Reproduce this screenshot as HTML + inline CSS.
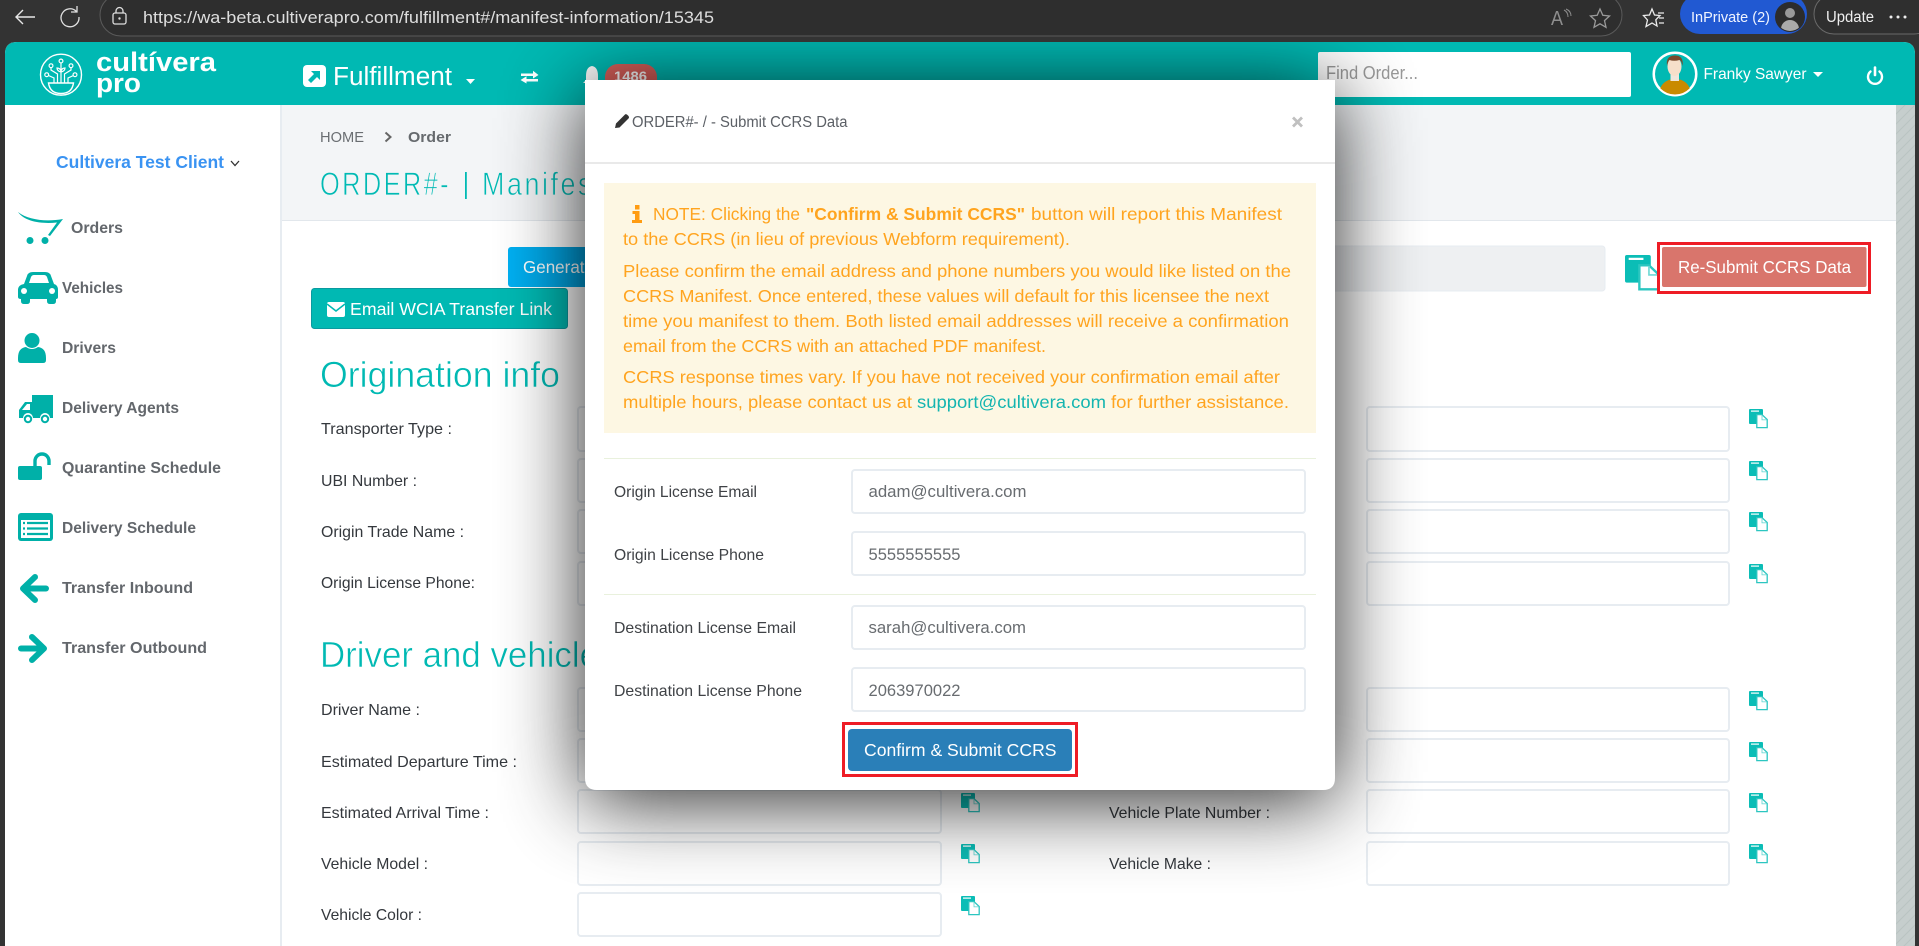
<!DOCTYPE html>
<html lang="en">
<head>
<meta charset="utf-8">
<title>Submit CCRS Data</title>
<style>
html,body{margin:0;padding:0;background:#333;width:1919px;height:946px;overflow:hidden}
svg{display:block}
text{font-family:"Liberation Sans",sans-serif;white-space:pre}
.lb{font-size:16px;fill:#34383d}
.nav{font-size:16px;font-weight:bold;fill:#63676c}
.al{font-size:17.5px;fill:#ffa41f}
.ml{font-size:16px;fill:#3f4246}
.mv{font-size:16.5px;fill:#686c70}
.h2{font-size:36px;fill:#00b9b3;stroke:#fff;stroke-width:.55px}
.ttl{font-size:32px;fill:#00bab4;stroke:#f3f5f7;stroke-width:.7px}
.inp{fill:#fff;stroke:#e7ecf1;stroke-width:2}
.ico{fill:#00b0a8}
</style>
</head>
<body>
<svg xmlns="http://www.w3.org/2000/svg" width="1919" height="946" viewBox="0 0 1919 946">
<defs>
<symbol id="copy" viewBox="0 0 19 19" overflow="visible">
<path d="M1 0H13Q14 0 14 1V15H1Q0 15 0 14V1Q0 0 1 0Z" fill="#0bbdb6"/>
<rect x="2" y="1.500" width="8" height="1.200" fill="#fff"/>
<path d="M7.800 5.600H13L18.200 10.500V18.600H7.800Z" fill="#fff" stroke="#2cc6c0" stroke-width="1.300"/>
<path d="M13 6V10.800H18" fill="none" stroke="#6fd9d5" stroke-width=".9"/>
</symbol>
<filter id="blur" x="-50%" y="-50%" width="200%" height="200%"><feGaussianBlur stdDeviation="42"/></filter>
<clipPath id="page"><path d="M5 54Q5 42 17 42H1903Q1915 42 1915 54V946H5Z"/></clipPath>
<clipPath id="av"><circle cx="1675" cy="74" r="20.500"/></clipPath>
<clipPath id="av2"><circle cx="1790" cy="17" r="14"/></clipPath>
<pattern id="sb" width="10" height="10" patternUnits="userSpaceOnUse"><rect width="10" height="10" fill="#c6cecd"/><path d="M0 10L10 0M-3 3L3 -3M7 13L13 7" stroke="#b9c3c2" stroke-width="1"/></pattern>
<linearGradient id="gen" x1="0" x2="1" y1="0" y2="0"><stop offset="0" stop-color="#00b0f2"/><stop offset="1" stop-color="#0090c8"/></linearGradient>
</defs>

<!-- Browser chrome -->
<rect width="1919" height="946" fill="#333"/>
<rect x="100" y="-6" width="1522" height="42" rx="21" fill="#2e2e2e" stroke="#5a5a5a" stroke-width="1"/>
<path d="M35 17H16M23 10L16 17L23 24" fill="none" stroke="#e8e8e8" stroke-width="1.400"/>
<path d="M76.500 11.500A9 9 0 1 0 79 17M77 6V12H71" fill="none" stroke="#e0e0e0" stroke-width="1.300"/>
<rect x="113" y="13" width="13" height="11" rx="2" fill="none" stroke="#ddd" stroke-width="1.300"/>
<path d="M116 13V11A3.500 3.500 0 0 1 123 11V13" fill="none" stroke="#ddd" stroke-width="1.300"/>
<circle cx="119.500" cy="18.500" r="1.200" fill="#ddd"/>
<text x="143" y="23" font-size="16.500" fill="#dedede" textLength="571" lengthAdjust="spacingAndGlyphs">https://wa-beta.cultiverapro.com/fulfillment#/manifest-information/15345</text>
<text x="1551" y="25" font-size="20" fill="#8d8d8d" textLength="12" lengthAdjust="spacingAndGlyphs">A</text>
<path d="M1564 10Q1568 12 1568 17M1566 9Q1571 11 1571 16" fill="none" stroke="#8d8d8d" stroke-width="1"/>
<path d="M1600 9L1602.800 15.300L1609.500 16L1604.500 20.600L1606 27.300L1600 23.800L1594 27.300L1595.500 20.600L1590.500 16L1597.200 15.300Z" fill="none" stroke="#9a9a9a" stroke-width="1.300"/>
<path d="M1652 9L1654.500 15L1660 15.500L1655.800 19.800L1657 26L1652 23L1646 26.500L1647.500 20L1643.500 15.500L1649.500 15Z" fill="none" stroke="#ececec" stroke-width="1.300"/>
<path d="M1658 13H1664M1659 18H1664M1659 23H1664" stroke="#ececec" stroke-width="1.200"/>
<rect x="1680" y="-6" width="127" height="40" rx="20" fill="#2159d2"/>
<text x="1691" y="22" font-size="15" fill="#f0f4ff" textLength="79" lengthAdjust="spacingAndGlyphs">InPrivate (2)</text>
<circle cx="1790" cy="17" r="15" fill="#2c2c2c"/>
<g clip-path="url(#av2)"><circle cx="1790" cy="13" r="5" fill="#999"/><ellipse cx="1790" cy="29" rx="9" ry="9" fill="#aaa"/></g>
<rect x="1814" y="-6" width="120" height="40" rx="20" fill="#2f2f2f" stroke="#6a6a6a"/>
<text x="1826" y="22" font-size="15.500" fill="#eee" textLength="48" lengthAdjust="spacingAndGlyphs">Update</text>
<circle cx="1891" cy="17" r="1.500" fill="#eee"/><circle cx="1898" cy="17" r="1.500" fill="#eee"/><circle cx="1905" cy="17" r="1.500" fill="#eee"/>

<!-- App page -->
<g clip-path="url(#page)">
<rect x="5" y="42" width="1910" height="904" fill="#fff"/>
<rect x="5" y="42" width="1910" height="63" fill="#00b9b3"/>
<!-- Logo -->
<g fill="none" stroke="#fff" stroke-width="1.200">
<circle cx="61" cy="74.700" r="20.500" stroke-width="1.400"/>
<path d="M48.500 83H73.500Q72 93.500 61 93.500Q50 93.500 48.500 83Z" stroke-width="1.400"/>
<path d="M61 83V63M57.500 83V74L51 70V67.500M64.500 83V74L71 70V67.500M54 83V78L48.500 75.500M68 83V78L73.500 75.500M61 72Q57 71 57 68Q60 68 61 71Q62 68 65 68Q65 71 61 72Z"/>
<circle cx="61" cy="61" r="1.900"/><circle cx="51" cy="65.700" r="1.900"/><circle cx="71" cy="65.700" r="1.900"/><circle cx="46.700" cy="74.700" r="1.900"/><circle cx="75" cy="74.700" r="1.900"/>
</g>
<text x="96" y="71" font-size="27" font-weight="bold" fill="#fff" textLength="120" lengthAdjust="spacingAndGlyphs">cultívera</text>
<text x="96" y="92" font-size="27" font-weight="bold" fill="#fff" textLength="45" lengthAdjust="spacingAndGlyphs">pro</text>
<!-- Fulfillment -->
<rect x="303" y="65" width="23" height="22" rx="4" fill="#fff"/>
<path d="M311 71H320V80L317 77L311 83L308 80L314 74Z" fill="#00b9b3"/>
<text x="333" y="85" font-size="25.500" fill="#fff" textLength="119" lengthAdjust="spacingAndGlyphs">Fulfillment</text>
<path d="M466 79H475L470.500 84Z" fill="#fff"/>
<path d="M521 73.500H533V70.800L538.500 75L533 78.500V76H521ZM538 79H526.500V76.200L520.500 80L526.500 83.500V81.500H538Z" fill="#fff"/>
<path d="M592 66Q598 67 598 76V80L601 83H583L586 80V76Q586 67 592 66Z" fill="#fff"/>
<rect x="605" y="64" width="52" height="30" rx="13" fill="#d9605a"/>
<text x="614" y="81" font-size="14" font-weight="bold" fill="#fff" textLength="33" lengthAdjust="spacingAndGlyphs">1486</text>
<!-- Search -->
<rect x="1318" y="52" width="313" height="45" rx="2" fill="#fff"/>
<text x="1326" y="79" font-size="18.500" fill="#999" textLength="92" lengthAdjust="spacingAndGlyphs">Find Order...</text>
<!-- User -->
<circle cx="1675" cy="74" r="21.500" fill="#fff" stroke="#fff" stroke-width="2"/>
<circle cx="1675" cy="74" r="20" fill="#00b9b3"/>
<g clip-path="url(#av)">
<path d="M1659 96Q1659 83 1670 79.500L1675 81L1680 79.500Q1691 83 1691 96Z" fill="#c98a00"/>
<rect x="1670.500" y="72" width="8.500" height="9" fill="#efe6dc"/>
<ellipse cx="1674.500" cy="66.500" rx="7" ry="9.500" fill="#f6dfca"/>
<path d="M1667 66Q1665.500 55.500 1675 55.500Q1684 55.500 1682.500 66Q1681.500 60.500 1679.500 60Q1674 61.500 1669.500 60Q1668 61 1667 66Z" fill="#7b4a2c"/>
</g>
<text x="1703.500" y="79" font-size="16" fill="#fff" textLength="103" lengthAdjust="spacingAndGlyphs">Franky Sawyer</text>
<path d="M1813 72H1823L1818 77Z" fill="#fff"/>
<path d="M1870.500 71.500A7 7 0 1 0 1879.500 71.500" fill="none" stroke="#fff" stroke-width="2.400" stroke-linecap="round"/>
<path d="M1875 67.500V75" stroke="#fff" stroke-width="2.600" stroke-linecap="round"/>

<!-- Sidebar -->
<rect x="280" y="105" width="2" height="841" fill="#e7ecf1"/>
<text x="56" y="168" font-size="17.500" font-weight="bold" fill="#3a93f2" textLength="168" lengthAdjust="spacingAndGlyphs">Cultivera Test Client</text>
<path d="M231 161L235 165.500L239 161" fill="none" stroke="#333" stroke-width="1.300"/>

<path class="ico" d="M18 212C28 220 46 222 63 219L50 236L48 235L57 222.500C42 224 25 222 18 212Z"/>
<circle class="ico" cx="30" cy="240.500" r="3.500"/><circle class="ico" cx="45" cy="240.500" r="3.500"/>
<text class="nav" x="71" y="233" textLength="52" lengthAdjust="spacingAndGlyphs">Orders</text>

<path class="ico" fill-rule="evenodd" d="M24 284L27 276Q28 272 33 272H45Q50 272 51 276L54 284Q58 285 58 290V297Q58 299 56 299V301Q56 304 53 304H50Q47 304 47 301V299H30V301Q30 304 27 304H24Q21 304 21 301V299Q18 299 18 297V290Q18 285 24 284ZM29 283H49L47 277Q46 275 44 275H34Q32 275 31 277Z"/>
<circle cx="24" cy="291" r="3" fill="#fff"/><circle cx="52" cy="291" r="3" fill="#fff"/>
<text class="nav" x="62" y="293" textLength="61" lengthAdjust="spacingAndGlyphs">Vehicles</text>

<circle class="ico" cx="32" cy="340.500" r="7.500"/>
<path class="ico" d="M18 358Q18 348 26 347Q32 351 38 347Q46 348 46 358V360Q46 363 43 363H21Q18 363 18 360Z"/>
<text class="nav" x="62" y="353" textLength="54" lengthAdjust="spacingAndGlyphs">Drivers</text>

<path class="ico" fill-rule="evenodd" d="M32 395H53V418H50A5 5 0 0 0 40 418H33A5 5 0 0 0 23 418H19V410L25 402H32ZM27 404L22 410H30V404Z"/>
<circle cx="28" cy="419" r="3.200" fill="#fff" stroke="#00b0a8" stroke-width="2"/><circle cx="45" cy="419" r="3.200" fill="#fff" stroke="#00b0a8" stroke-width="2"/>
<text class="nav" x="62" y="413" textLength="117" lengthAdjust="spacingAndGlyphs">Delivery Agents</text>

<rect class="ico" x="18" y="466" width="24" height="14" rx="2"/>
<path d="M35 466V461A7 7 0 0 1 49 461V465" fill="none" stroke="#00b0a8" stroke-width="3.400"/>
<text class="nav" x="62" y="473" textLength="159" lengthAdjust="spacingAndGlyphs">Quarantine Schedule</text>

<rect class="ico" x="18" y="513" width="35" height="28" rx="3"/>
<rect x="21" y="520" width="29" height="18" fill="#fff"/>
<path d="M27 523H48M27 528.500H48M27 534H48" stroke="#00b0a8" stroke-width="2.200"/>
<path d="M23 523H25M23 528.500H25M23 534H25" stroke="#00b0a8" stroke-width="2.200"/>
<text class="nav" x="62" y="533" textLength="134" lengthAdjust="spacingAndGlyphs">Delivery Schedule</text>

<path d="M35 577L23 588.500L35 600M25 588.500H46" fill="none" stroke="#00b0a8" stroke-width="6" stroke-linecap="round" stroke-linejoin="round"/>
<text class="nav" x="62" y="593" textLength="131" lengthAdjust="spacingAndGlyphs">Transfer Inbound</text>

<path d="M32 637L44 648.500L32 660M42 648.500H21" fill="none" stroke="#00b0a8" stroke-width="6" stroke-linecap="round" stroke-linejoin="round"/>
<text class="nav" x="62" y="653" textLength="145" lengthAdjust="spacingAndGlyphs">Transfer Outbound</text>

<!-- Content header -->
<rect x="282" y="105" width="1614" height="115" fill="#f3f5f7"/>
<rect x="282" y="220" width="1614" height="1" fill="#e2e7ec"/>
<rect x="1896" y="105" width="19" height="841" fill="url(#sb)"/>
<text x="320" y="142" font-size="15" fill="#6a6e72" textLength="44" lengthAdjust="spacingAndGlyphs">HOME</text>
<path d="M385.500 132.500L390.500 137L385.500 141.500" fill="none" stroke="#666" stroke-width="2"/>
<text x="408" y="142" font-size="15" font-weight="bold" fill="#666a6e" textLength="43" lengthAdjust="spacingAndGlyphs">Order</text>
<text class="ttl" x="320" y="195" textLength="131" lengthAdjust="spacingAndGlyphs" letter-spacing="3">ORDER#-</text>
<rect x="465" y="172" width="1.800" height="27" fill="#00bab4"/>
<text class="ttl" x="482" y="195" textLength="122" lengthAdjust="spacingAndGlyphs" letter-spacing="3">Manifest</text>

<!-- Content buttons -->
<rect x="508" y="247" width="160" height="40" rx="3" fill="url(#gen)"/>
<text x="523" y="273" font-size="17.500" fill="#fff" textLength="71" lengthAdjust="spacingAndGlyphs">Generate</text>
<rect x="311.500" y="288.500" width="256" height="40" rx="3" fill="#00b9b3" stroke="#0a9aa0"/>
<rect x="327" y="302" width="18" height="15" rx="2" fill="#fff"/>
<path d="M327 304L336 311L345 304" fill="none" stroke="#00b9b3" stroke-width="1.500"/>
<text x="350" y="315" font-size="17.500" fill="#fff" textLength="202" lengthAdjust="spacingAndGlyphs">Email WCIA Transfer Link</text>
<rect x="1300" y="246" width="305" height="45" rx="3" fill="#eef0f2" stroke="#e7ecf1"/>
<use href="#copy" x="1625" y="255" width="35" height="35"/>

<!-- Origination -->
<text class="h2" x="320" y="387" textLength="240" lengthAdjust="spacingAndGlyphs">Origination info</text>
<text class="lb" x="321" y="434" textLength="131" lengthAdjust="spacingAndGlyphs">Transporter Type :</text>
<text class="lb" x="321" y="486" textLength="96" lengthAdjust="spacingAndGlyphs">UBI Number :</text>
<text class="lb" x="321" y="537" textLength="143" lengthAdjust="spacingAndGlyphs">Origin Trade Name :</text>
<text class="lb" x="321" y="588" textLength="154" lengthAdjust="spacingAndGlyphs">Origin License Phone:</text>

<rect class="inp" x="578" y="407" width="363" height="44" rx="3"/>
<rect class="inp" x="578" y="459" width="363" height="43" rx="3"/>
<rect class="inp" x="578" y="510" width="363" height="43" rx="3"/>
<rect class="inp" x="578" y="562" width="363" height="43" rx="3"/>
<rect class="inp" x="1367" y="407" width="362" height="44" rx="3"/>
<rect class="inp" x="1367" y="459" width="362" height="43" rx="3"/>
<rect class="inp" x="1367" y="510" width="362" height="43" rx="3"/>
<rect class="inp" x="1367" y="562" width="362" height="43" rx="3"/>
<use href="#copy" x="961" y="409" width="19" height="19"/>
<use href="#copy" x="961" y="461" width="19" height="19"/>
<use href="#copy" x="961" y="512" width="19" height="19"/>
<use href="#copy" x="961" y="564" width="19" height="19"/>
<use href="#copy" x="1749" y="409" width="19" height="19"/>
<use href="#copy" x="1749" y="461" width="19" height="19"/>
<use href="#copy" x="1749" y="512" width="19" height="19"/>
<use href="#copy" x="1749" y="564" width="19" height="19"/>

<!-- Driver and vehicle -->
<text class="h2" x="320" y="667" textLength="279" lengthAdjust="spacingAndGlyphs">Driver and vehicle</text>
<text class="lb" x="321" y="715" textLength="99" lengthAdjust="spacingAndGlyphs">Driver Name :</text>
<text class="lb" x="321" y="767" textLength="196" lengthAdjust="spacingAndGlyphs">Estimated Departure Time :</text>
<text class="lb" x="321" y="818" textLength="168" lengthAdjust="spacingAndGlyphs">Estimated Arrival Time :</text>
<text class="lb" x="321" y="869" textLength="107" lengthAdjust="spacingAndGlyphs">Vehicle Model :</text>
<text class="lb" x="321" y="920" textLength="101" lengthAdjust="spacingAndGlyphs">Vehicle Color :</text>
<text class="lb" x="1109" y="818" textLength="161" lengthAdjust="spacingAndGlyphs">Vehicle Plate Number :</text>
<text class="lb" x="1109" y="869" textLength="102" lengthAdjust="spacingAndGlyphs">Vehicle Make :</text>

<rect class="inp" x="578" y="688" width="363" height="43" rx="3"/>
<rect class="inp" x="578" y="739" width="363" height="43" rx="3"/>
<rect class="inp" x="578" y="790" width="363" height="43" rx="3"/>
<rect class="inp" x="578" y="842" width="363" height="43" rx="3"/>
<rect class="inp" x="578" y="893" width="363" height="43" rx="3"/>
<rect class="inp" x="1367" y="688" width="362" height="43" rx="3"/>
<rect class="inp" x="1367" y="739" width="362" height="43" rx="3"/>
<rect class="inp" x="1367" y="790" width="362" height="43" rx="3"/>
<rect class="inp" x="1367" y="842" width="362" height="43" rx="3"/>
<use href="#copy" x="961" y="793" width="19" height="19"/>
<use href="#copy" x="961" y="844" width="19" height="19"/>
<use href="#copy" x="961" y="896" width="19" height="19"/>
<use href="#copy" x="1749" y="691" width="19" height="19"/>
<use href="#copy" x="1749" y="742" width="19" height="19"/>
<use href="#copy" x="1749" y="793" width="19" height="19"/>
<use href="#copy" x="1749" y="844" width="19" height="19"/>

<!-- Modal shadow -->
<rect x="585" y="90" width="750" height="710" fill="#000" opacity=".85" filter="url(#blur)"/>
</g>

<!-- Re-submit highlight -->
<rect x="1658.500" y="243.500" width="211" height="49" fill="none" stroke="#ee1c25" stroke-width="3"/>
<rect x="1662" y="247" width="204.500" height="40" rx="2" fill="#d9756c"/>
<text x="1678" y="273" font-size="17.500" fill="#fff" textLength="173" lengthAdjust="spacingAndGlyphs">Re-Submit CCRS Data</text>

<!-- Modal -->
<path d="M585 80H1335V778Q1335 790 1323 790H597Q585 790 585 778Z" fill="#fff"/>
<path d="M615 128L616 123.500L625 114.500Q626 113.500 627.500 115L628.500 116Q629.500 117.500 628.500 118.500L619.500 127.500Z" fill="#333"/>
<text x="632" y="127" font-size="15.500" fill="#5c6066" textLength="215.500" lengthAdjust="spacingAndGlyphs">ORDER#- / - Submit CCRS Data</text>
<path d="M1293 117.500L1302 126.500M1302 117.500L1293 126.500" stroke="#c0c0c0" stroke-width="2.800"/>
<rect x="585" y="162" width="750" height="2" fill="#e9e9e9"/>

<rect x="604" y="183" width="712" height="250" fill="#fdf7e3"/>
<path d="M635 205H639.500V209.500H635ZM632.500 211H639.500V220H642V223H632V220H635V214H632.500Z" fill="#ff9c12"/>
<text class="al" x="653" y="220" textLength="147" lengthAdjust="spacingAndGlyphs">NOTE: Clicking the</text>
<text class="al" x="806" y="220" font-weight="bold" textLength="219" lengthAdjust="spacingAndGlyphs">"Confirm &amp; Submit CCRS"</text>
<text class="al" x="1031" y="220" textLength="251" lengthAdjust="spacingAndGlyphs">button will report this Manifest</text>
<text class="al" x="623" y="245" textLength="447" lengthAdjust="spacingAndGlyphs">to the CCRS (in lieu of previous Webform requirement).</text>
<text class="al" x="623" y="277" textLength="668" lengthAdjust="spacingAndGlyphs">Please confirm the email address and phone numbers you would like listed on the</text>
<text class="al" x="623" y="302" textLength="646" lengthAdjust="spacingAndGlyphs">CCRS Manifest. Once entered, these values will default for this licensee the next</text>
<text class="al" x="623" y="327" textLength="666" lengthAdjust="spacingAndGlyphs">time you manifest to them. Both listed email addresses will receive a confirmation</text>
<text class="al" x="623" y="352" textLength="423" lengthAdjust="spacingAndGlyphs">email from the CCRS with an attached PDF manifest.</text>
<text class="al" x="623" y="383" textLength="657" lengthAdjust="spacingAndGlyphs">CCRS response times vary. If you have not received your confirmation email after</text>
<text class="al" x="623" y="408" textLength="289" lengthAdjust="spacingAndGlyphs">multiple hours, please contact us at</text>
<text x="917" y="408" font-size="17.500" fill="#14b5b0" textLength="189" lengthAdjust="spacingAndGlyphs">support@cultivera.com</text>
<text class="al" x="1111" y="408" textLength="178" lengthAdjust="spacingAndGlyphs">for further assistance.</text>

<rect x="604" y="458" width="712" height="1" fill="#e9f1dd"/>
<rect x="604" y="594" width="712" height="1" fill="#e9f1dd"/>

<text class="ml" x="614" y="497" textLength="143" lengthAdjust="spacingAndGlyphs">Origin License Email</text>
<rect class="inp" x="852" y="470" width="453" height="43" rx="3"/>
<text class="mv" x="868.500" y="497" textLength="158" lengthAdjust="spacingAndGlyphs">adam@cultivera.com</text>

<text class="ml" x="614" y="560" textLength="150" lengthAdjust="spacingAndGlyphs">Origin License Phone</text>
<rect class="inp" x="852" y="532" width="453" height="43" rx="3"/>
<text class="mv" x="868.500" y="560" textLength="92" lengthAdjust="spacingAndGlyphs">5555555555</text>

<text class="ml" x="614" y="633" textLength="182" lengthAdjust="spacingAndGlyphs">Destination License Email</text>
<rect class="inp" x="852" y="606" width="453" height="43" rx="3"/>
<text class="mv" x="868.500" y="633" textLength="157.500" lengthAdjust="spacingAndGlyphs">sarah@cultivera.com</text>

<text class="ml" x="614" y="696" textLength="188" lengthAdjust="spacingAndGlyphs">Destination License Phone</text>
<rect class="inp" x="852" y="668" width="453" height="43" rx="3"/>
<text class="mv" x="868.500" y="696" textLength="92" lengthAdjust="spacingAndGlyphs">2063970022</text>

<rect x="843.500" y="723.500" width="233" height="52" fill="none" stroke="#ee1c25" stroke-width="3"/>
<rect x="848" y="729" width="224" height="42" rx="4" fill="#2a7fb8"/>
<text x="864" y="756" font-size="17.500" fill="#fff" textLength="192.500" lengthAdjust="spacingAndGlyphs">Confirm &amp; Submit CCRS</text>
</svg>
</body>
</html>
